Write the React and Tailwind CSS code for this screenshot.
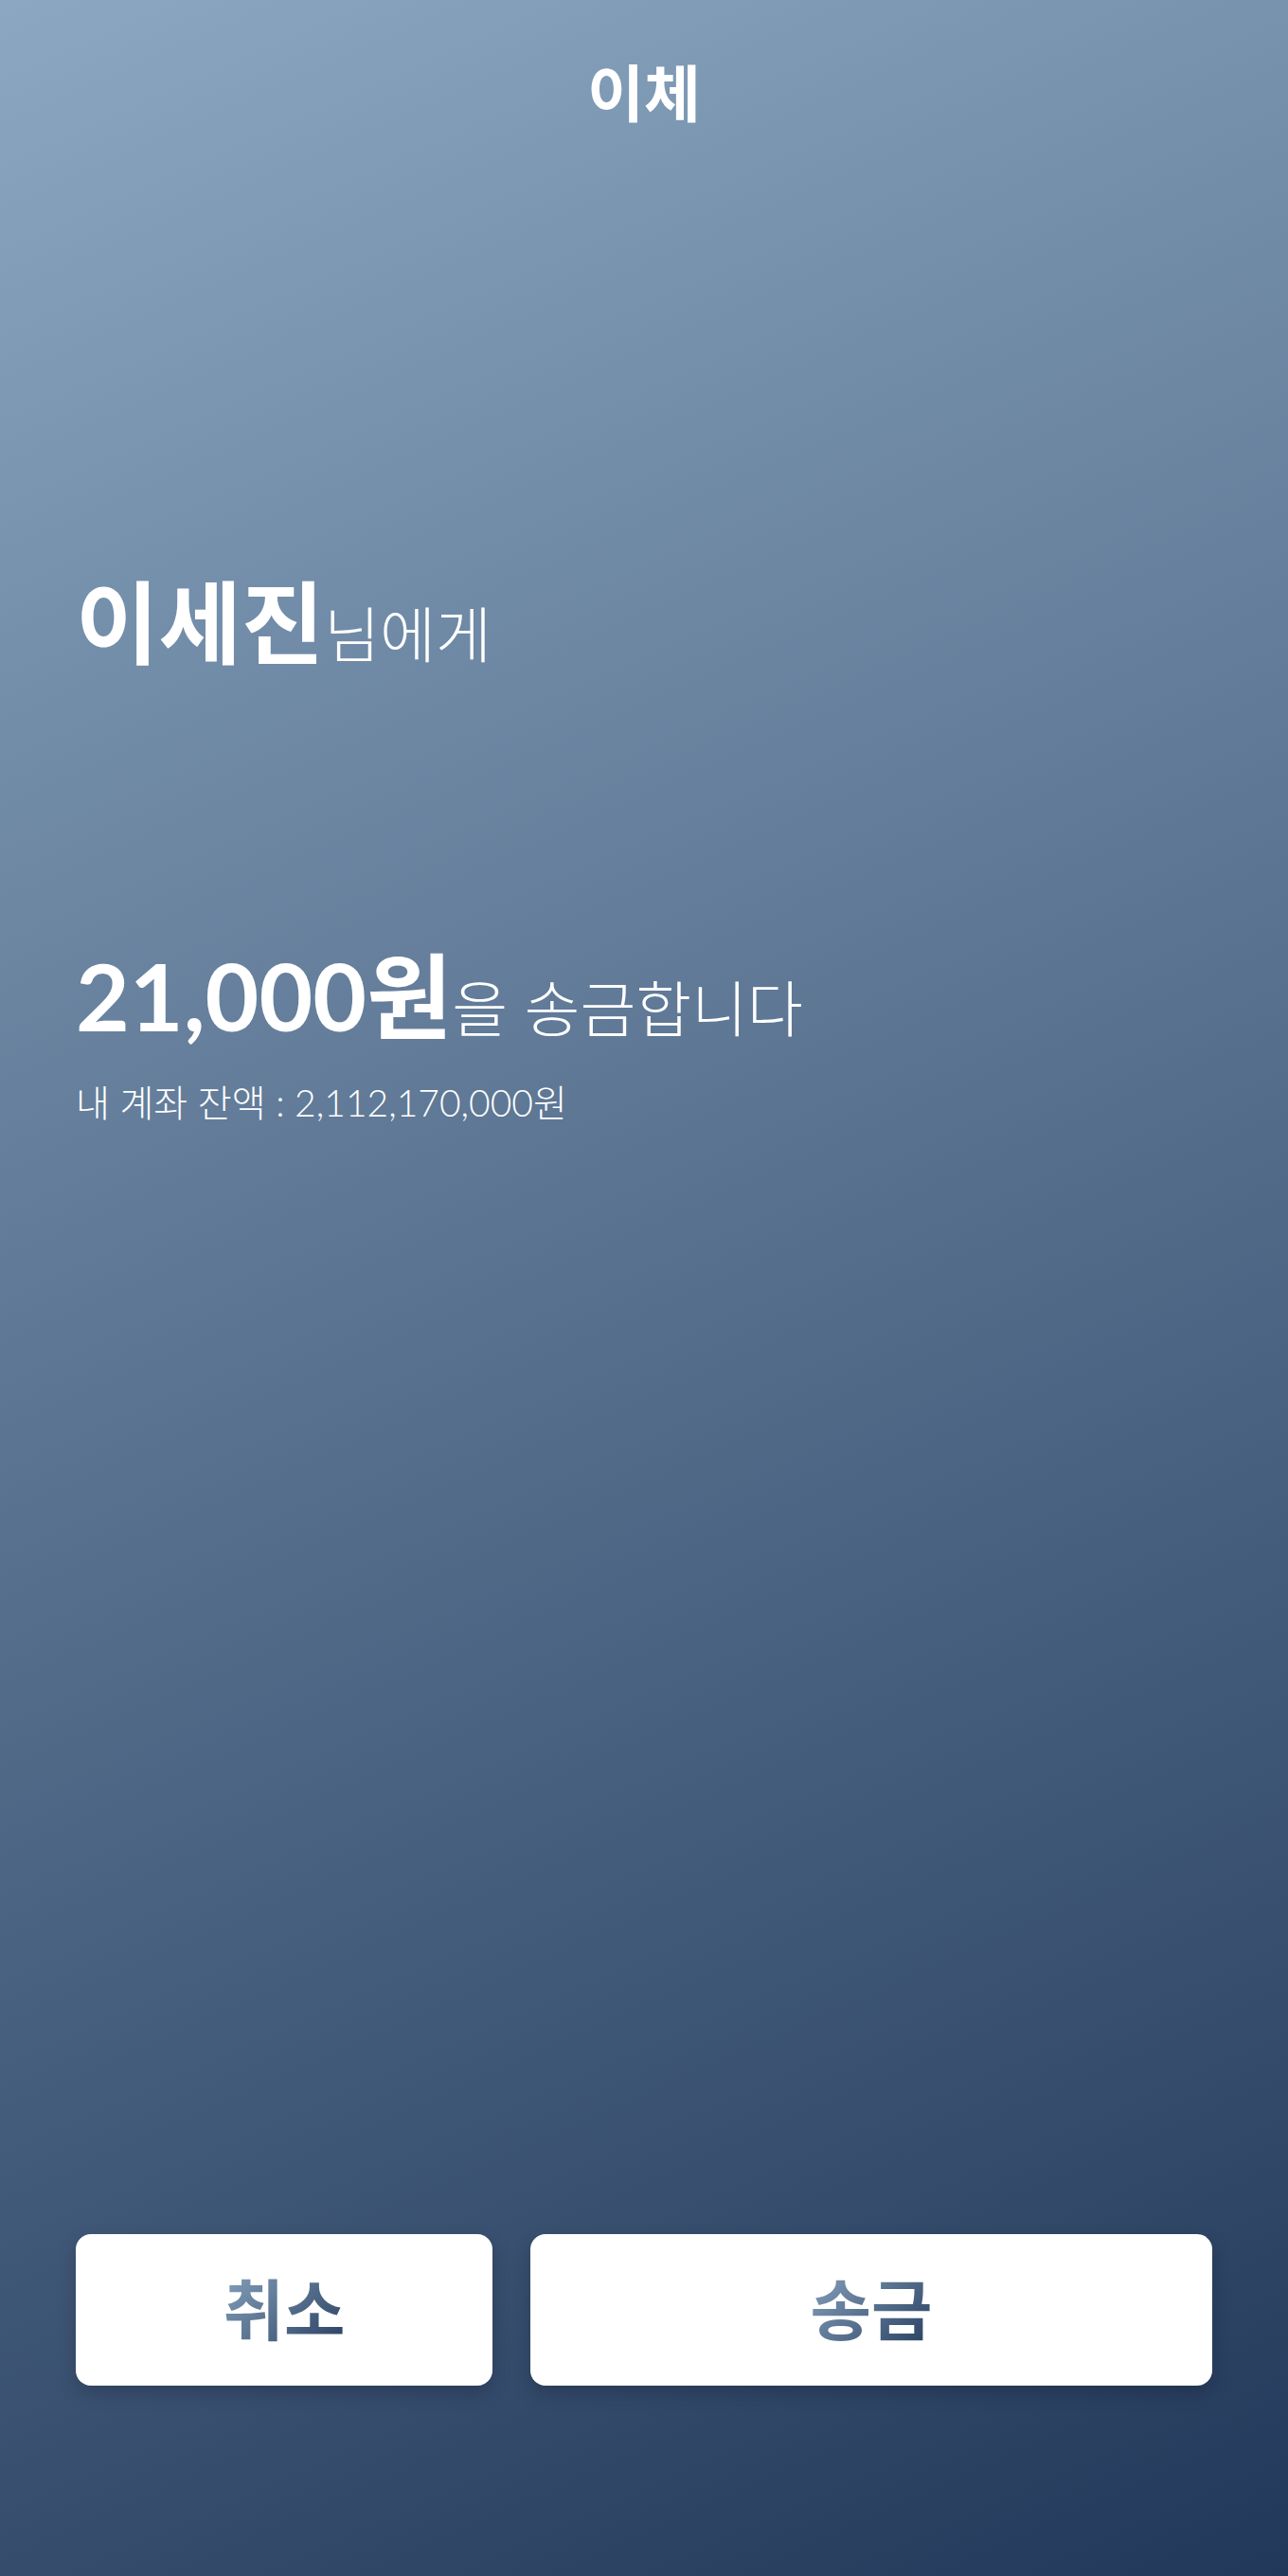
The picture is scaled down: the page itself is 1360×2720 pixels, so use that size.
export default function App() {
  return (
    <div className="min-h-[2720px] w-full flex flex-col bg-[linear-gradient(156deg,#8ba7c1_0%,#22385a_100%)] font-['Lato','Noto_Sans_CJK_KR',sans-serif] text-white">
      <header className="pt-[66px] flex justify-center">
        <h1 className="text-[65px] font-bold leading-none">이체</h1>
      </header>
      <main className="px-[80px] flex flex-col">
        <div className="mt-[479px] flex items-baseline leading-none">
          <span className="text-[95px] font-bold">이세진</span>
          <span className="text-[64px] font-light">님에게</span>
        </div>
        <div className="mt-[297px] flex items-baseline leading-none whitespace-pre">
          <span className="text-[98px] font-bold">21,000원</span>
          <span className="text-[64px] font-light">을 송금합니다</span>
        </div>
        <p className="mt-[45px] text-[39px] font-light leading-none">내 계좌 잔액 : 2,112,170,000원</p>
      </main>
      <footer className="mt-auto px-[80px] pb-[201px] flex gap-[40px]">
        <button className="w-[440px] h-[160px] rounded-[16px] bg-white shadow-[0_8px_20px_rgba(0,0,0,0.2)] flex items-center justify-center">
          <span className="text-[70px] font-bold bg-[linear-gradient(135deg,#8ba7c1,#22385a)] bg-clip-text text-transparent">취소</span>
        </button>
        <button className="flex-1 h-[160px] rounded-[16px] bg-white shadow-[0_8px_20px_rgba(0,0,0,0.2)] flex items-center justify-center">
          <span className="text-[70px] font-bold bg-[linear-gradient(135deg,#8ba7c1,#22385a)] bg-clip-text text-transparent">송금</span>
        </button>
      </footer>
    </div>
  );
}
